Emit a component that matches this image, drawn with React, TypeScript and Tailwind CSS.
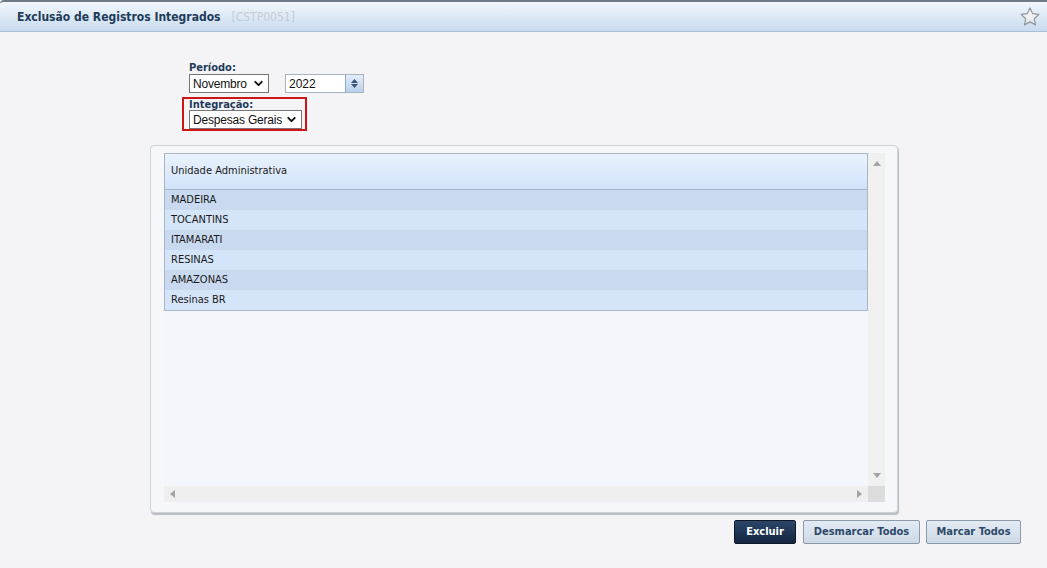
import { ChevronDown } from "lucide-react";

const FONT = "font-['Tahoma','DejaVu_Sans_Condensed','Liberation_Sans',sans-serif]";

const ROWS = ["MADEIRA", "TOCANTINS", "ITAMARATI", "RESINAS", "AMAZONAS", "Resinas BR"];

function FakeSelect({ label, width }: { label: string; width: string }) {
  return (
    <div
      className={`flex h-[19px] items-center justify-between whitespace-nowrap border border-[#767676] bg-white pl-[3px] pr-[3px] text-[12px] leading-none tracking-[-0.2px] text-[#111] font-['Liberation_Sans',sans-serif] ${width}`}
    >
      <span>{label}</span>
      <ChevronDown size={13} strokeWidth={3.5} className="shrink-0 text-[#111]" />
    </div>
  );
}

function Star() {
  return (
    <svg width="22" height="22" viewBox="0 0 24 24">
      <defs>
        <linearGradient id="starFill" x1="0" y1="0" x2="0" y2="1">
          <stop offset="0" stopColor="#ffffff" />
          <stop offset="1" stopColor="#dfe3e8" />
        </linearGradient>
      </defs>
      <path
        d="M12 2.2l2.9 6.2 6.8.8-5 4.7 1.3 6.7L12 17.3l-6 3.3 1.3-6.7-5-4.7 6.8-.8z"
        fill="url(#starFill)"
        stroke="#8f969d"
        strokeWidth="1.3"
        strokeLinejoin="round"
      />
    </svg>
  );
}

export default function App() {
  return (
    <div className={`h-[568px] w-[1047px] overflow-hidden bg-[#f4f4f7] ${FONT}`}>
      {/* ── Cabeçalho ── */}
      <div className="flex h-[32px] items-center justify-between rounded-tl-[4px] border-t-2 border-b border-t-[#6f7a84] border-b-[#aabfd3] bg-gradient-to-b from-[#f2f7fc] to-[#c8dbee] pl-[17px] pr-[6px]">
        <div className="flex items-baseline gap-[11px]">
          <span className="text-[12px] font-bold text-[#1e3b5a]">Exclusão de Registros Integrados</span>
          <span className="text-[12px] text-[#c3cbd3]">[CSTP0051]</span>
        </div>
        <Star />
      </div>

      {/* ── Filtros ── */}
      <div className="ml-[182px] mt-[30px] flex flex-col">
        <div className="ml-[7px]">
          <div className="text-[11px] font-bold leading-[12px] text-[#1e3b5a]">Período:</div>
          <div className="flex items-center gap-[16px]">
            <FakeSelect label="Novembro" width="w-[80px]" />
            <div className="flex h-[19px] w-[79px] border border-[#a9b3bd] bg-white">
              <span className="flex-1 pl-[3px] pt-[2px] text-[12px] leading-[14px] text-[#111] font-['Liberation_Sans',sans-serif]">2022</span>
              <div className="flex w-[18px] flex-col items-center justify-center gap-[1px] border-l border-[#8fa9c6] bg-gradient-to-b from-[#e3eefb] to-[#b9d1ec]">
                <svg width="7" height="4" viewBox="0 0 7 4"><path d="M0 4L3.5 0 7 4z" fill="#3b5370" /></svg>
                <svg width="7" height="4" viewBox="0 0 7 4"><path d="M0 0l3.5 4L7 0z" fill="#3b5370" /></svg>
              </div>
            </div>
          </div>
        </div>
        <div className="mt-[4px] w-[125px] border-2 border-[#cc1616] pl-[5px] pt-[1px]">
          <div className="text-[11px] font-bold leading-[10px] text-[#1e3b5a]">Integração:</div>
          <FakeSelect label="Despesas Gerais" width="w-[113px]" />
        </div>
      </div>

      {/* ── Grade ── */}
      <div className="ml-[150px] mt-[14px] w-[748px] rounded-[4px] border border-[#cfd3d8] bg-[#f5f7fb] pb-[10px] pl-[13px] pr-[12px] pt-[7px] shadow-[1px_2px_1px_#b9bdc2]">
        <div className="flex h-[349px] flex-col bg-[#f3f6fb]">
          <div className="flex flex-1">
            <div className="flex-1">
              <div className="border border-[#a8b6c5]">
                <div className="flex h-[36px] items-center border-b border-[#a8b6c5] bg-gradient-to-b from-[#e9f2fd] to-[#d1e3fa] pl-[6px] text-[11px] text-[#1a1a1a]">
                  Unidade Administrativa
                </div>
                {ROWS.map((r, i) => (
                  <div
                    key={r}
                    className={`flex h-[20px] items-center pl-[6px] text-[11px] text-[#1a1a1a] ${i % 2 === 0 ? "bg-[#c9daf0]" : "bg-[#d4e4f9]"}`}
                  >
                    {r}
                  </div>
                ))}
              </div>
            </div>
            {/* barra vertical */}
            <div className="flex w-[17px] flex-col items-center justify-between bg-[#f0f0f0] pb-[8px] pt-[8px]">
              <svg width="8" height="5" viewBox="0 0 8 5"><path d="M0 5L4 0l4 5z" fill="#a3a3a3" /></svg>
              <svg width="8" height="5" viewBox="0 0 8 5"><path d="M0 0l4 5 4-5z" fill="#a3a3a3" /></svg>
            </div>
          </div>
          {/* barra horizontal */}
          <div className="flex h-[16px]">
            <div className="flex flex-1 items-center justify-between bg-[#efefef] pl-[6px] pr-[6px]">
              <svg width="5" height="8" viewBox="0 0 5 8"><path d="M5 0L0 4l5 4z" fill="#a3a3a3" /></svg>
              <svg width="5" height="8" viewBox="0 0 5 8"><path d="M0 0l5 4-5 4z" fill="#a3a3a3" /></svg>
            </div>
            <div className="w-[17px] bg-[#dcdcdc]" />
          </div>
        </div>
      </div>

      {/* ── Ações ── */}
      <div className="mr-[26px] mt-[7px] flex justify-end">
        <button className="h-[24px] w-[62px] rounded-[2px] border border-[#0c1729] bg-gradient-to-b from-[#2c4669] to-[#14253f] text-[11px] font-bold text-white">
          Excluir
        </button>
        <button className="ml-[7px] h-[24px] w-[117px] rounded-[2px] border border-[#8c99a8] bg-gradient-to-b from-[#e3ebf4] to-[#cdd9e6] text-[11px] font-bold text-[#2e4968]">
          Desmarcar Todos
        </button>
        <button className="ml-[6px] h-[24px] w-[95px] rounded-[2px] border border-[#8c99a8] bg-gradient-to-b from-[#e3ebf4] to-[#cdd9e6] text-[11px] font-bold text-[#2e4968]">
          Marcar Todos
        </button>
      </div>
    </div>
  );
}
